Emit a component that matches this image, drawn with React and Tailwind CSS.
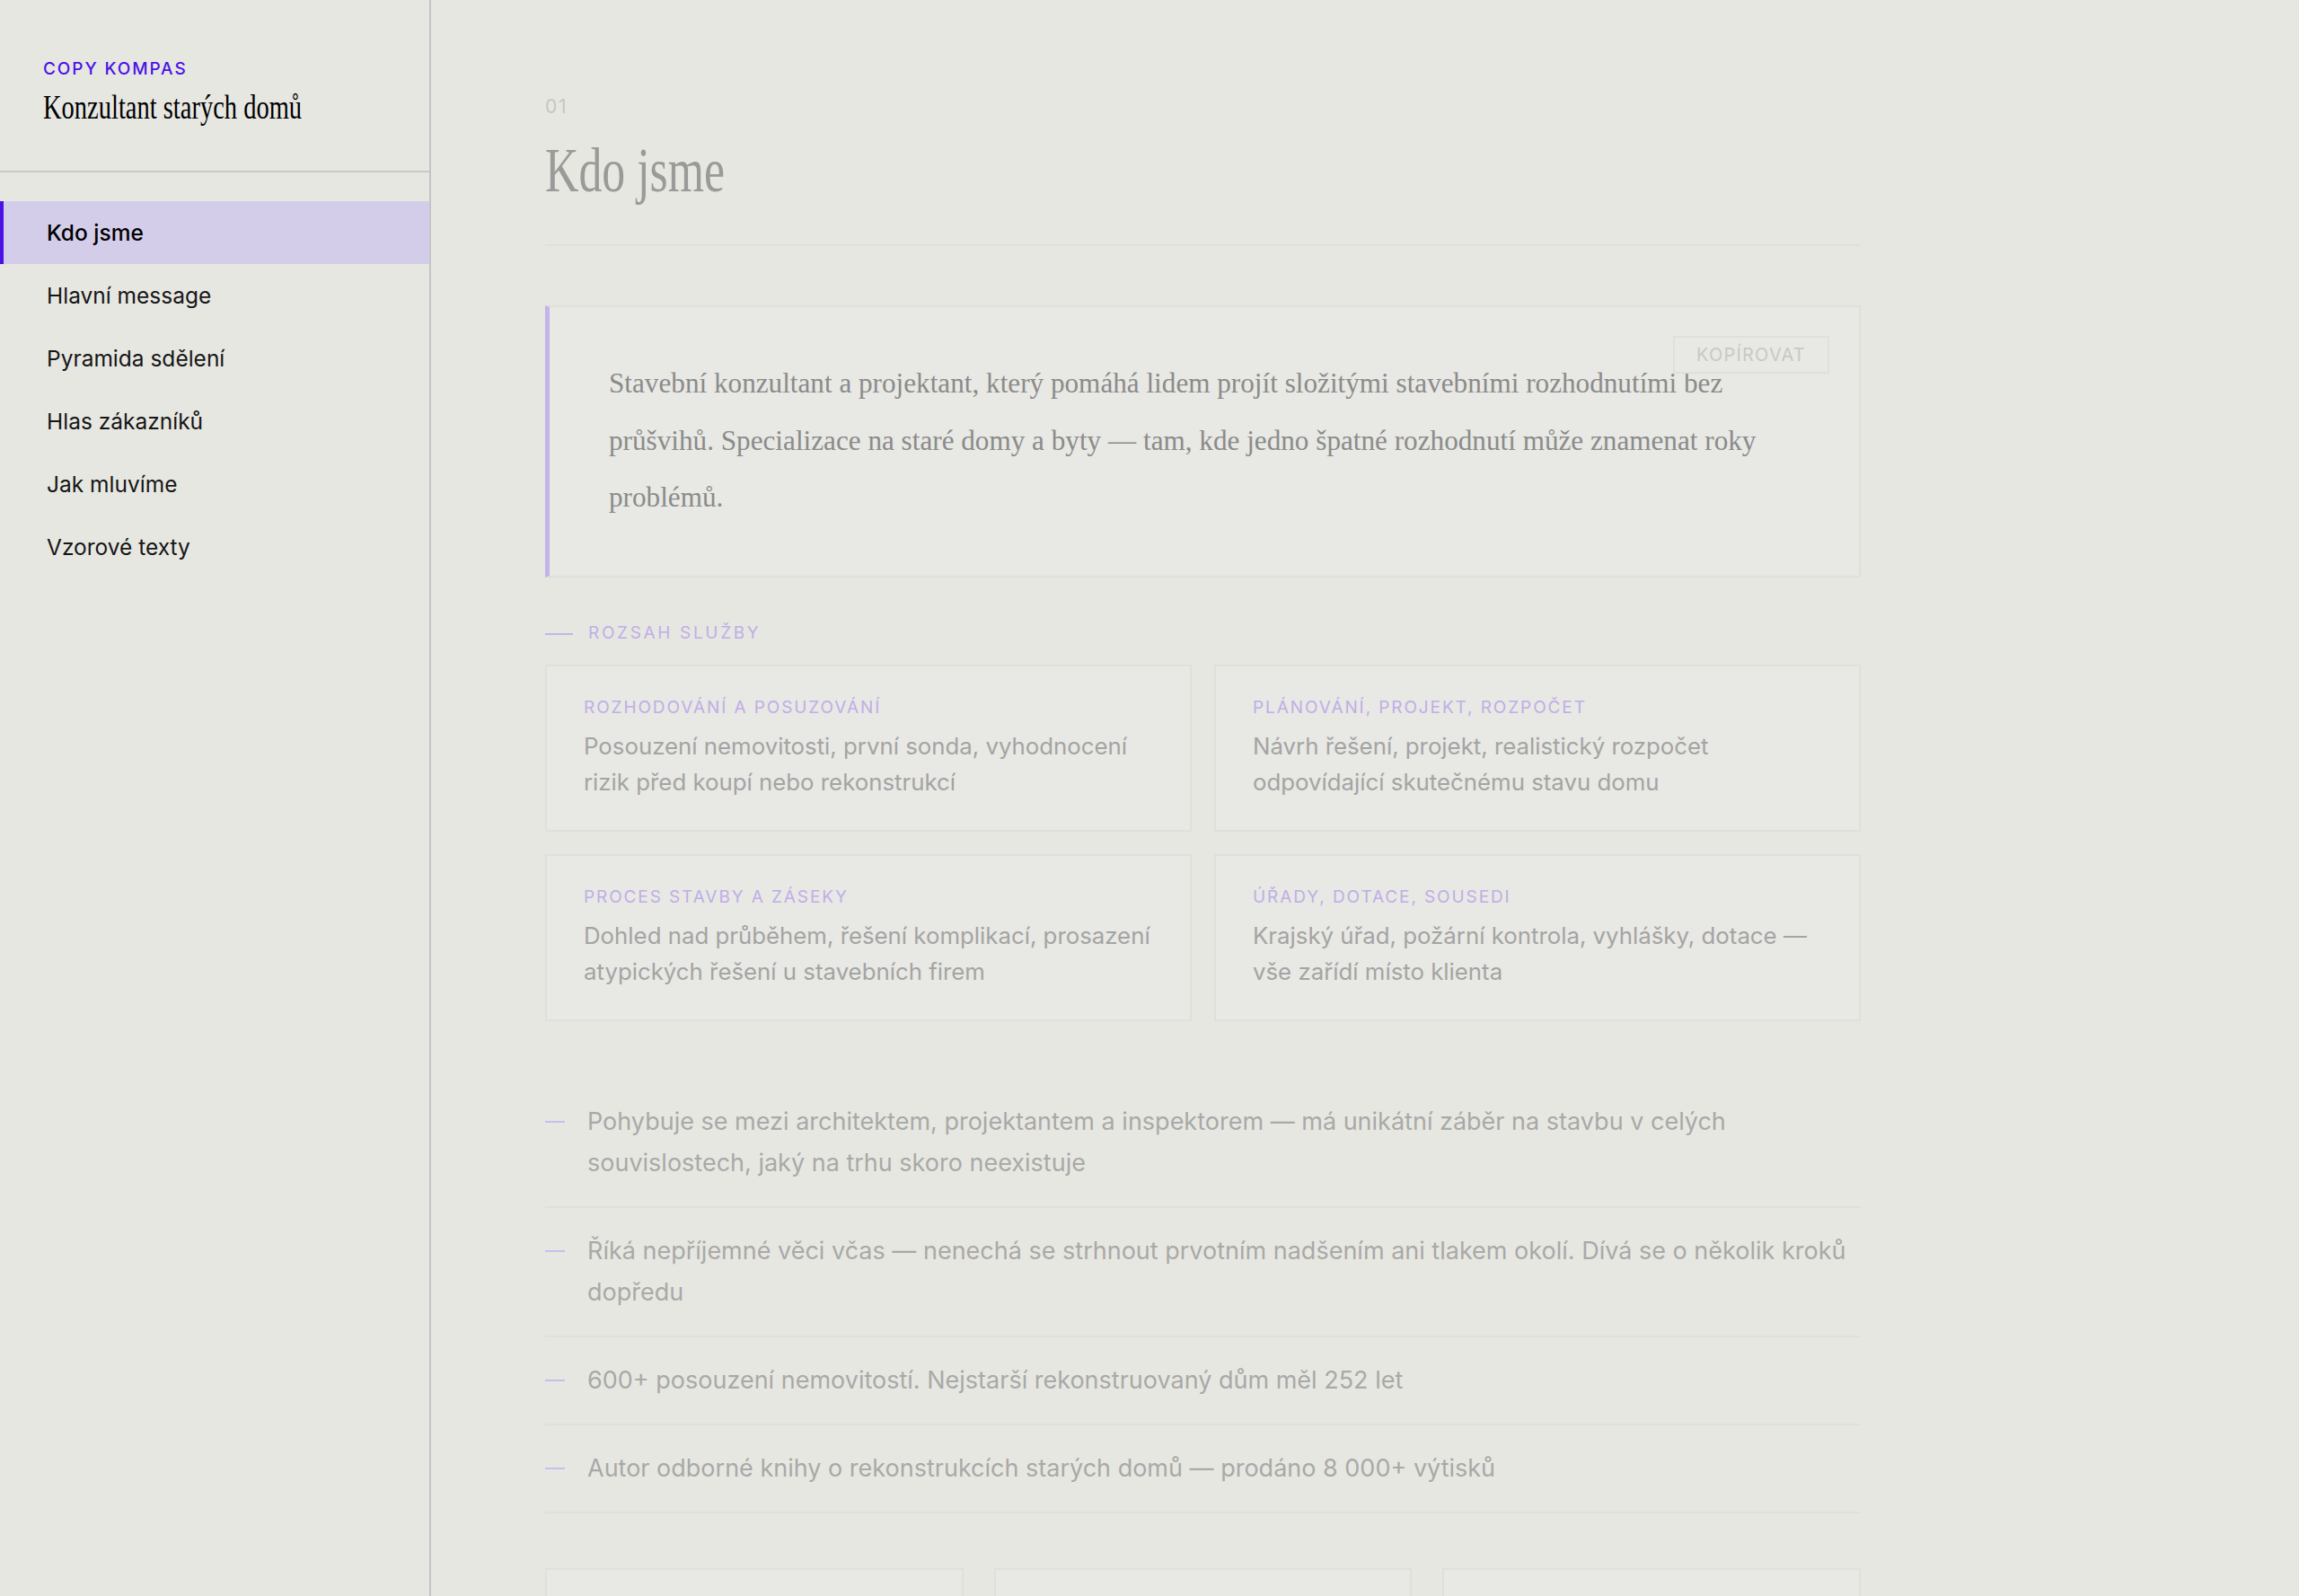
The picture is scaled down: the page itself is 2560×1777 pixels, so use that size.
const NAV = ['Kdo jsme', 'Hlavní message', 'Pyramida sdělení', 'Hlas zákazníků', 'Jak mluvíme', 'Vzorové texty'];

const SERVICES = [
    { title: 'Rozhodování a posuzování', text: 'Posouzení nemovitosti, první sonda, vyhodnocení rizik před koupí nebo rekonstrukcí' },
    { title: 'Plánování, projekt, rozpočet', text: 'Návrh řešení, projekt, realistický rozpočet odpovídající skutečnému stavu domu' },
    { title: 'Proces stavby a záseky', text: 'Dohled nad průběhem, řešení komplikací, prosazení atypických řešení u stavebních firem' },
    { title: 'Úřady, dotace, sousedi', text: 'Krajský úřad, požární kontrola, vyhlášky, dotace — vše zařídí místo klienta' },
];

const FACTS = [
    'Pohybuje se mezi architektem, projektantem a inspektorem — má unikátní záběr na stavbu v celých souvislostech, jaký na trhu skoro neexistuje',
    'Říká nepříjemné věci včas — nenechá se strhnout prvotním nadšením ani tlakem okolí. Dívá se o několik kroků dopředu',
    '600+ posouzení nemovitostí. Nejstarší rekonstruovaný dům měl 252 let',
    'Autor odborné knihy o rekonstrukcích starých domů — prodáno 8 000+ výtisků',
];

const sans = { fontFamily: 'Inter, "Noto Sans", sans-serif' };

function Sidebar({ active }) {
    return (
        <aside className="w-[480px] shrink-0 h-full border-r-2 border-[#c4c4c9] flex flex-col">
            <div className="h-[192px] border-b-2 border-[#c9c9cb] pl-[48px] pt-[65px]">
                <div className="text-[19px] leading-[24px] font-medium tracking-[0.1em] text-[#4b12e6]">COPY KOMPAS</div>
                <div className="mt-[8px] font-['Liberation_Serif',serif] text-[38px] leading-[44px] text-black whitespace-nowrap origin-left scale-x-[0.75]">
                    Konzultant starých domů
                </div>
            </div>
            <nav className="pt-[32px]">
                {NAV.map(item => (
                    <div
                        key={item}
                        className={`h-[70px] flex items-center pl-[48px] border-l-4 text-[24.5px] ${item === active ? 'border-[#4b12e6] bg-[#d3cdea] text-black font-medium' : 'border-transparent text-[#161616]'}`}
                    >
                        {item}
                    </div>
                ))}
            </nav>
        </aside>
    );
}

export default function App() {
    return (
        <div className="h-screen w-full flex bg-[#e7e7e2] overflow-hidden" style={sans}>
            <Sidebar active="Kdo jsme" />

            <main className="flex-1 overflow-hidden pl-[127px]">
                <div className="w-[1465px] pt-[105px]">
                    {/* Section header */}
                    <div className="border-b-2 border-[#dfdfdb] pb-[44px]">
                        <div className="text-[21px] leading-[28px] tracking-[0.08em] text-[#c6c6c3]">01</div>
                        <h1 className="mt-[18px] font-['Liberation_Serif',serif] text-[70px] leading-[77px] text-[#9a9a98] whitespace-nowrap origin-left scale-x-[0.74]">
                            Kdo jsme
                        </h1>
                    </div>

                    {/* Quote */}
                    <div className="relative mt-[66px] border-2 border-l-[5px] border-[#dfdfdb] border-l-[#c4b4ea] bg-[#e8e8e5] pl-[66px] pr-[70px] pt-[53px] pb-[55px]">
                        <button className="absolute top-[32px] right-[33px] w-[174px] h-[42px] border-2 border-[#dfdfdb] text-[20px] tracking-[0.06em] text-[#c8c8c5]">
                            KOPÍROVAT
                        </button>
                        <p className="font-['Liberation_Serif',serif] text-[31.2px] leading-[63.5px] text-[#8b8b89]">
                            Stavební konzultant a projektant, který pomáhá lidem projít složitými stavebními rozhodnutími bez průšvihů. Specializace na staré domy a byty — tam, kde jedno špatné rozhodnutí může znamenat roky problémů.
                        </p>
                    </div>

                    {/* Services */}
                    <div className="mt-[51px] flex items-center gap-[17px] h-[24px]">
                        <span className="w-[31px] h-[2px] bg-[#c4b4ea]" />
                        <span className="text-[19px] tracking-[0.14em] text-[#c0aee6]">ROZSAH SLUŽBY</span>
                    </div>
                    <div className="mt-[22px] grid grid-cols-2 gap-[25px]">
                        {SERVICES.map(s => (
                            <div key={s.title} className="border-2 border-[#dfdfdb] bg-[#e8e8e5] px-[41px] pt-[33px] pb-[33px]">
                                <div className="text-[19px] leading-[26px] tracking-[0.1em] uppercase text-[#c0aee6]">{s.title}</div>
                                <div className="mt-[10px] text-[25.8px] leading-[40px] text-[#a4a4a2]">{s.text}</div>
                            </div>
                        ))}
                    </div>

                    {/* Facts */}
                    <ul className="mt-[64px]">
                        {FACTS.map(f => (
                            <li key={f} className="flex items-start gap-[25px] py-[25px] border-b-2 border-[#dfdfdb]">
                                <span className="mt-[22px] w-[22px] h-[2px] shrink-0 bg-[#cbbcee]" />
                                <span className="text-[27px] leading-[46px] text-[#a9a9a7]">{f}</span>
                            </li>
                        ))}
                    </ul>

                    {/* Bottom cards */}
                    <div className="mt-[61px] grid grid-cols-3 gap-[34px]">
                        <div className="h-[240px] border-2 border-[#dfdfdb] bg-[#e8e8e5]" />
                        <div className="h-[240px] border-2 border-[#dfdfdb] bg-[#e8e8e5]" />
                        <div className="h-[240px] border-2 border-[#dfdfdb] bg-[#e8e8e5]" />
                    </div>
                </div>
            </main>
        </div>
    );
}
